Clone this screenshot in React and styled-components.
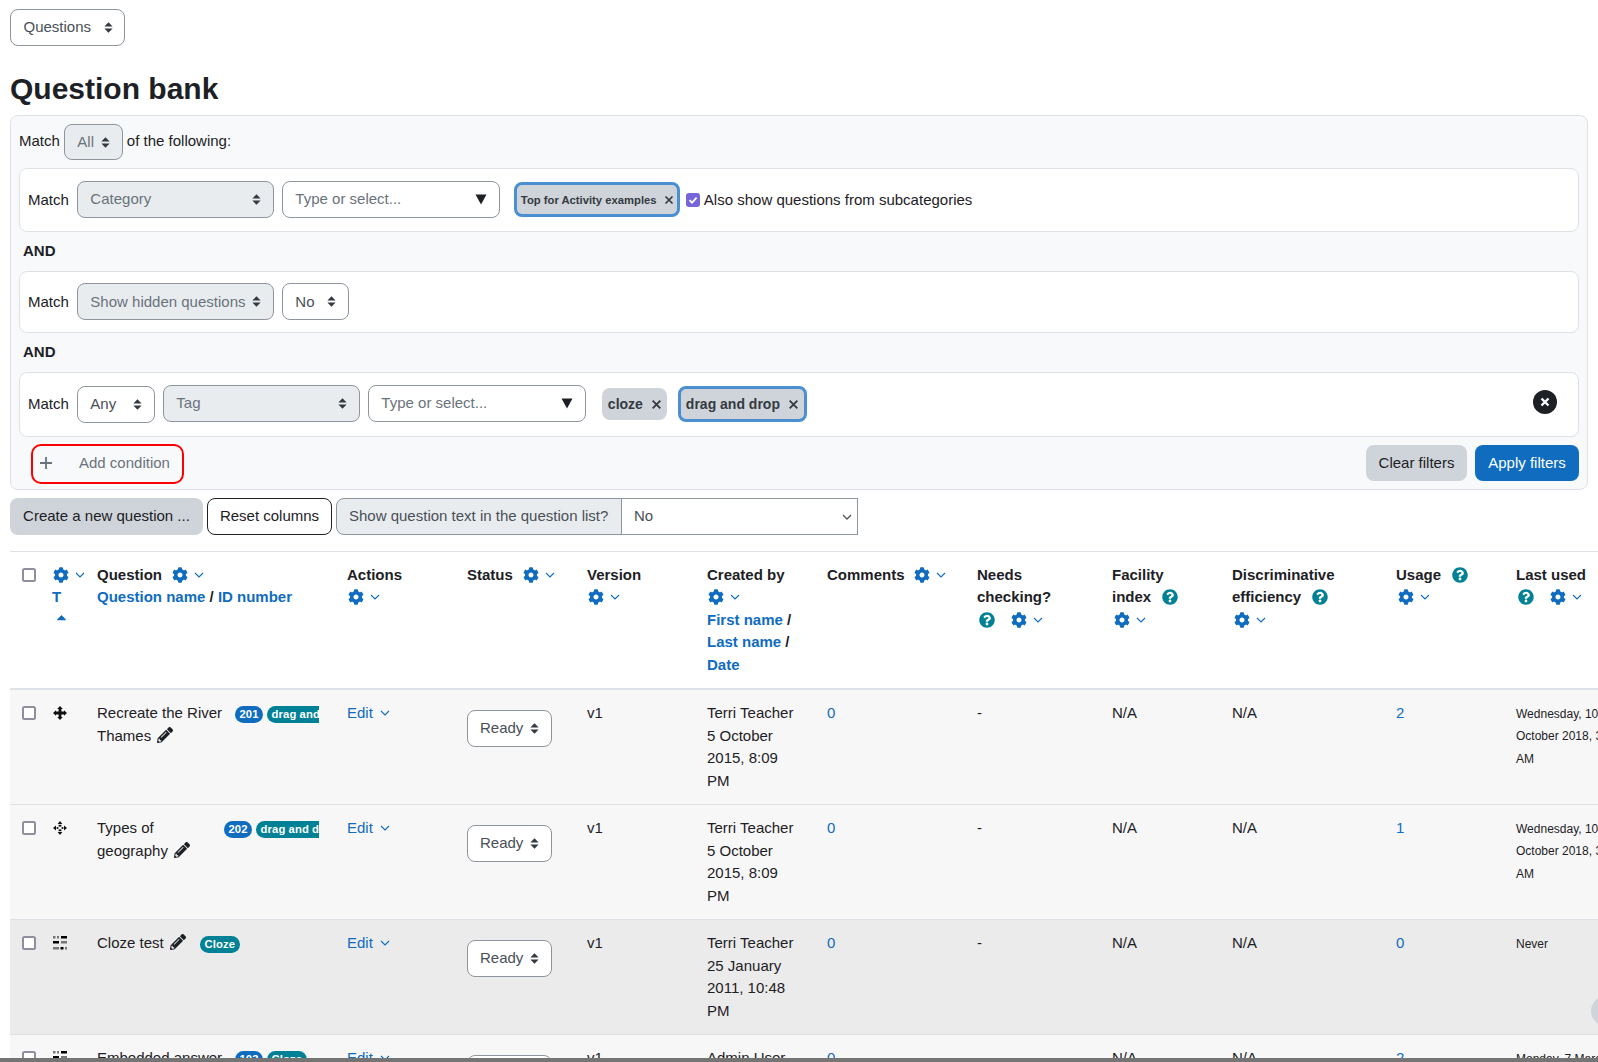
import React from "react";
import styled, { createGlobalStyle } from "styled-components";
import { FaCog, FaPencilAlt, FaQuestionCircle, FaCaretUp } from "react-icons/fa";

const Global = createGlobalStyle`
  html, body { margin: 0; padding: 0; height: 1062px; overflow: hidden; background: #fff; }
  body { font-family: "Liberation Sans", Arial, sans-serif; font-size: 15px; line-height: 22.5px; color: #1d2125; }
  * { box-sizing: border-box; }
`;

const Page = styled.div`
  position: relative;
  height: 1062px;
  padding: 9px 10px 0;
  overflow: hidden;
`;
const Control = styled.div`
  display: inline-flex;
  align-items: center;
  justify-content: space-between;
  flex: none;
  width: ${p => p.$w}px;
  height: ${p => p.$h || 37}px;
  margin-top: ${p => p.$mt || 0}px;
  padding: 0 11.5px 0 12.5px;
  border: 1px solid #8f959e;
  border-radius: 8px;
  color: ${p => (p.$muted ? "#6a737b" : "#495057")};
  background: ${p => (p.$off ? "#e9ecef" : "#fff")};
`;
const Heading = styled.h2`
  margin: 25px 0 9px;
  font-size: 30px;
  line-height: 35px;
  font-weight: 700;
  color: #1d2125;
`;
const FilterPanel = styled.section`
  border: 1px solid #dee2e6;
  border-radius: 8px;
  background: #f8f9fa;
  padding: 8px 8px 8px 8px;
  height: 375px;
`;
const MatchLine = styled.div`
  display: flex;
  align-items: flex-start;
  gap: 4px;
  height: 36px;
  margin-bottom: 8px;
  line-height: 34px;
`;
const Condition = styled.div`
  display: flex;
  align-items: center;
  height: ${p => p.$h}px;
  padding: 0 8px 0 8px;
  background: #fff;
  border: 1px solid #dee2e6;
  border-radius: 8px;
`;
const MatchLabel = styled.span`
  margin-right: 8px;
`;
const Gap = styled.div`
  width: 8px;
  flex: none;
`;
const AndLabel = styled.div`
  font-weight: 700;
  padding-left: 4px;
  height: 39.5px;
  line-height: 38px;
`;
const SelectedChip = styled.span`
  display: inline-flex;
  align-items: center;
  justify-content: space-between;
  flex: none;
  width: ${p => p.$w}px;
  height: ${p => p.$h}px;
  margin-left: ${p => p.$ml}px;
  padding: 0 ${p => (p.$small ? 3 : 5)}px 0 ${p => (p.$small ? 4 : p.$focus ? 5 : 6)}px;
  border-radius: 8px;
  background: #ced4da;
  border: ${p => (p.$focus ? "3px solid #4a90d0" : "none")};
  color: #343a40;
  font-weight: 700;
  font-size: ${p => (p.$small ? "11.25px" : "14px")};
`;
const ChipClose = styled.svg`
  width: ${p => p.$s}px;
  height: ${p => p.$s}px;
  flex: none;
`;
const CheckBox = styled.span`
  display: inline-flex;
  align-items: center;
  justify-content: center;
  width: 14px;
  height: 14px;
  margin: 0 4px 0 6px;
  border-radius: 3px;
  background: #7765dc;
`;
const RemoveButton = styled.span`
  display: inline-flex;
  align-items: center;
  justify-content: center;
  width: 24px;
  height: 24px;
  margin: -4px 13px 0 auto;
  border-radius: 50%;
  background: #1d2125;
`;
const FilterActions = styled.div`
  display: flex;
  align-items: flex-start;
  gap: 8px;
  margin-top: 7.5px;
`;
const AddCondition = styled.div`
  display: flex;
  align-items: center;
  width: 153px;
  height: 40px;
  margin: 0 auto 0 12px;
  padding: 0 0 2px 6px;
  border: 2px solid #f00;
  border-radius: 10px;
  color: #6a737b;
`;
const PlusMark = styled.svg`
  width: 14px;
  height: 14px;
  margin-right: 26px;
`;
const Button = styled.div`
  display: inline-flex;
  align-items: center;
  justify-content: center;
  flex: none;
  height: ${p => p.$h || 37}px;
  width: ${p => p.$w}px;
  margin-top: ${p => p.$mt || 0}px;
  border-radius: 8px;
  background: ${p => (p.$primary ? "#0f6cbf" : p.$outline ? "#fff" : "#ced4da")};
  color: ${p => (p.$primary ? "#fff" : "#1d2125")};
  border: ${p => (p.$outline ? "1px solid #1d2125" : "none")};
`;
const Toolbar = styled.div`
  display: flex;
  gap: 4px;
  margin-top: 8px;
  height: 37px;
`;
const InputGroup = styled.div`
  display: flex;
`;
const GroupLabel = styled.div`
  display: flex;
  align-items: center;
  width: 286px;
  padding-left: 12px;
  background: #e9ecef;
  border: 1px solid #8f959e;
  border-radius: 8px 0 0 8px;
  color: #495057;
`;
const NativeSelect = styled.select`
  appearance: none;
  width: 237px;
  height: 37px;
  margin-left: -1px;
  padding: 0 12px;
  background: #fff url("data:image/svg+xml,%3Csvg xmlns='http://www.w3.org/2000/svg' width='10' height='6'%3E%3Cpath d='M1 1l4 4 4-4' fill='none' stroke='%23555' stroke-width='1.3'/%3E%3C/svg%3E") no-repeat right 5px center;
  border: 1px solid #8f959e;
  border-radius: 0;
  color: #495057;
  font: inherit;
`;
const TableWrap = styled.div`
  margin-top: 16.4px;
  width: 1588px;
  overflow: hidden;
`;
const Table = styled.table`
  border-collapse: collapse;
  table-layout: fixed;
  width: 1628px;
  border-top: 1px solid #dee2e6;
`;
const Th = styled.th`
  padding: 11.2px 12px 0;
  vertical-align: top;
  text-align: left;
  font-weight: 700;
  border-bottom: 2px solid #dee2e6;
  height: 137px;
`;
const Row = styled.tr`
  background: ${p => (p.$hover ? "#ebebeb" : "#f7f7f7")};
`;
const Td = styled.td`
  padding: 12.3px 12px 11.7px;
  vertical-align: top;
  height: 115px;
  border-bottom: 1px solid #dee2e6;
`;
const SmallCell = styled(Td)`
  padding: 12.7px 12px 11.3px;
  font-size: 12px;
`;
const Link = styled.span`
  color: #0f6cbf;
`;
const SortLink = styled.span`
  color: #0f6cbf;
`;
const Tools = styled.span`
  display: inline-flex;
  align-items: center;
  gap: 6px;
  height: 16px;
  margin-left: ${p => p.$ml ?? 0}px;
  color: #0f6cbf;
  vertical-align: -3px;
`;
const HelpIcon = styled(FaQuestionCircle)`
  width: 16px;
  height: 16px;
  color: #008196;
  vertical-align: -3px;
  margin: ${p => p.$m || "0 0 0 7px"};
`;
const Thin = styled.svg`
  width: 10px;
  height: 6px;
  flex: none;
`;
const CheckCell = styled.span`
  display: block;
  width: 14px;
  height: 14px;
  margin-top: ${p => p.$mt ?? 4}px;
  border: 2px solid #8f8f9d;
  border-radius: 2.5px;
  background: #fff;
`;
const NameFlex = styled.div`
  display: flex;
  align-items: flex-start;
  width: 222px;
  overflow: hidden;
`;
const NameText = styled.div`
  flex: none;
  width: ${p => p.$w}px;
`;
const Pencil = styled(FaPencilAlt)`
  width: 16px;
  height: 16px;
  margin-left: 2px;
  color: #1d2125;
  vertical-align: -2px;
`;
const Badges = styled.div`
  display: flex;
  gap: 4px;
  flex: none;
  margin-top: 3.7px;
`;
const Badge = styled.span`
  flex: none;
  height: 17px;
  padding: 0 4.5px;
  border-radius: 9px;
  font-size: 11.25px;
  line-height: 17px;
  font-weight: 700;
  color: #fff;
  letter-spacing: 0.1px;
  background: ${p => (p.$teal ? "#008196" : "#0f6cbf")};
`;
const EditWrap = styled.span`
  display: inline-flex;
  align-items: center;
  gap: 7px;
  color: #0f6cbf;
`;
const StatusSelect = styled(Control)`
  margin-top: 7.7px;
  padding: 0 12px;
`;
const SortCaret = styled(FaCaretUp)`
  margin-left: 2px;
`;
const ScrollLine = styled.div`
  position: absolute;
  left: 0;
  right: 0;
  bottom: 0;
  height: 4px;
  background: #757575;
`;
const Floating = styled.div`
  position: absolute;
  left: 1591px;
  top: 996px;
  width: 30px;
  height: 30px;
  border-radius: 50%;
  background: #ced4da;
`;
const GearIcon = styled(FaCog)`
  width: 16px;
  height: 16px;
`;
const SmallGlyph = styled.svg`
  display: block;
  margin: 3.7px 0 0 1px;
  width: 14px;
  height: 14px;
`;

const Updown = () => (
  <svg width="9" height="11" viewBox="0 0 9 11" style={{ flex: "none" }}>
    <path d="M4.5 0.3 8.6 4.4H.4zM4.5 10.7.4 6.6h8.2z" fill="#343a40" />
  </svg>
);
const DownTri = () => (
  <svg width="12" height="11" viewBox="0 0 12 11" style={{ flex: "none" }}>
    <path d="M.5.5h11L6 10.5z" fill="#1d2125" />
  </svg>
);
const Chev = () => (
  <Thin viewBox="0 0 10 6">
    <path d="M1 1l4 4 4-4" fill="none" stroke="#0f6cbf" strokeWidth="1.1" />
  </Thin>
);
const Gear = ({ ml }) => (
  <Tools $ml={ml}>
    <GearIcon />
    <Chev />
  </Tools>
);
const X = ({ s, c = "#343a40", w = 1.7 }) => (
  <ChipClose $s={s} viewBox="0 0 10 10">
    <path d="M1.5 1.5l7 7M8.5 1.5l-7 7" stroke={c} strokeWidth={w} fill="none" />
  </ChipClose>
);
const MoveIcon = () => (
  <SmallGlyph viewBox="0 0 14 14">
    <path d="M5.6 5.6V3H4.2L7 0l2.8 3H8.4v2.6H11V4.2L14 7l-3 2.8V8.4H8.4V11h1.4L7 14l-2.8-3h1.4V8.4H3v1.4L0 7l3-2.8v1.4z" fill="#111" />
  </SmallGlyph>
);
const DotsIcon = () => (
  <SmallGlyph viewBox="0 0 14 14">
    <path d="M7 0l2.4 3H4.6zM7 14l-2.4-3h4.8zM0 7l3-2.4v4.8zM14 7l-3 2.4V4.6z" fill="#111" />
    <rect x="5.6" y="3.8" width="2.8" height="1.8" fill="#111" />
    <rect x="5.6" y="8.4" width="2.8" height="1.8" fill="#111" />
    <rect x="3.6" y="6.1" width="1.8" height="1.8" fill="#111" />
    <rect x="8.6" y="6.1" width="1.8" height="1.8" fill="#111" />
  </SmallGlyph>
);
const ClozeIcon = () => (
  <SmallGlyph viewBox="0 0 14 14">
    <rect x="0" y="0" width="2.5" height="2.5" fill="#777" />
    <rect x="4" y="0" width="2" height="2.5" fill="#777" />
    <rect x="8" y="0" width="6" height="2.5" fill="#000" />
    <rect x="0" y="5" width="6" height="2.5" fill="#000" />
    <rect x="8" y="5" width="6" height="2.5" fill="#777" />
    <rect x="0" y="11" width="6" height="2.5" fill="#777" />
    <rect x="7.5" y="11" width="3" height="2.5" fill="#000" />
    <rect x="12" y="11" width="2" height="2.5" fill="#777" />
  </SmallGlyph>
);

const widths = [30, 45, 250, 120, 120, 120, 120, 150, 135, 120, 164, 120, 134];

const rows = [
  {
    icon: <MoveIcon />,
    name: <>Recreate the River Thames <Pencil /></>,
    nameW: 138,
    badges: [["201", false], ["drag and drop", true]],
    by: "Terri Teacher",
    date: "5 October 2015, 8:09 PM",
    usage: 2,
    last: "Wednesday, 10 October 2018, 3:24 AM",
  },
  {
    icon: <DotsIcon />,
    name: <>Types of geography <Pencil /></>,
    nameW: 127,
    badges: [["202", false], ["drag and drop", true]],
    by: "Terri Teacher",
    date: "5 October 2015, 8:09 PM",
    usage: 1,
    last: "Wednesday, 10 October 2018, 3:24 AM",
  },
  {
    icon: <ClozeIcon />,
    name: <>Cloze test <Pencil /></>,
    nameW: 103,
    badges: [["Cloze", true]],
    by: "Terri Teacher",
    date: "25 January 2011, 10:48 PM",
    usage: 0,
    last: "Never",
    hover: true,
  },
  {
    icon: <ClozeIcon />,
    name: <>Embedded answer</>,
    nameW: 138,
    badges: [["103", false], ["Cloze", true]],
    by: "Admin User",
    date: "7 March 2011, 9:21 AM",
    usage: 2,
    last: "Monday, 7 March 2011, 9:21 AM",
  },
];

export default function App() {
  return (
    <Page>
      <Global />
      <Control $w={115}>Questions <Updown /></Control>
      <Heading>Question bank</Heading>
      <FilterPanel>
        <MatchLine>
          Match
          <Control $w={59} $h={36} $off $muted>All <Updown /></Control>
          of the following:
        </MatchLine>
        <Condition $h={63.5}>
          <MatchLabel>Match</MatchLabel>
          <Control $w={197} $mt={-1} $off $muted>Category <Updown /></Control>
          <Gap />
          <Control $w={218} $mt={-1} $muted>Type or select... <DownTri /></Control>
          <SelectedChip $w={166} $h={35} $ml={14} $focus $small>
            Top for Activity examples <X s={10} />
          </SelectedChip>
          <CheckBox>
            <svg width="10" height="10" viewBox="0 0 10 10">
              <path d="M1.5 5.2 4 7.6l4.6-5" fill="none" stroke="#fff" strokeWidth="1.8" />
            </svg>
          </CheckBox>
          Also show questions from subcategories
        </Condition>
        <AndLabel>AND</AndLabel>
        <Condition $h={61.5}>
          <MatchLabel>Match</MatchLabel>
          <Control $w={197} $off $muted>Show hidden questions <Updown /></Control>
          <Gap />
          <Control $w={67}>No <Updown /></Control>
        </Condition>
        <AndLabel>AND</AndLabel>
        <Condition $h={64.5}>
          <MatchLabel>Match</MatchLabel>
          <Control $w={78}>Any <Updown /></Control>
          <Gap />
          <Control $w={197} $mt={-2} $off $muted>Tag <Updown /></Control>
          <Gap />
          <Control $w={218} $mt={-2} $muted>Type or select... <DownTri /></Control>
          <SelectedChip $w={65} $h={32} $ml={16}>cloze <X s={11} /></SelectedChip>
          <SelectedChip $w={129} $h={36} $ml={11} $focus>drag and drop <X s={11} /></SelectedChip>
          <RemoveButton><X s={10} c="#fff" w={2.4} /></RemoveButton>
        </Condition>
        <FilterActions>
          <AddCondition>
            <PlusMark viewBox="0 0 14 14">
              <path d="M7 1v12M1 7h12" stroke="#6a737b" strokeWidth="1.8" fill="none" />
            </PlusMark>
            Add condition
          </AddCondition>
          <Button $w={101} $h={36} $mt={1}>Clear filters</Button>
          <Button $w={104} $h={36} $mt={1} $primary>Apply filters</Button>
        </FilterActions>
      </FilterPanel>
      <Toolbar>
        <Button $w={193}>Create a new question ...</Button>
        <Button $w={125} $outline>Reset columns</Button>
        <InputGroup>
          <GroupLabel>Show question text in the question list?</GroupLabel>
          <NativeSelect defaultValue="No"><option>No</option></NativeSelect>
        </InputGroup>
      </Toolbar>
      <TableWrap>
        <Table>
          <colgroup>
            {widths.map((w, i) => <col key={i} width={w} />)}
          </colgroup>
          <thead>
            <tr>
              <Th><CheckCell /></Th>
              <Th>
                <Gear ml={1} />
                <br />
                <SortLink>T</SortLink>
                <br />
                <Link><SortCaret /></Link>
              </Th>
              <Th>Question <Gear ml={6} /><br /><SortLink>Question name</SortLink> / <SortLink>ID number</SortLink></Th>
              <Th>Actions<br /><Gear ml={1} /></Th>
              <Th>Status <Gear ml={6} /></Th>
              <Th>Version<br /><Gear ml={1} /></Th>
              <Th>Created by<br /><Gear ml={1} /><br /><SortLink>First name</SortLink> /<br /><SortLink>Last name</SortLink> /<br /><SortLink>Date</SortLink></Th>
              <Th>Comments <Gear ml={5} /></Th>
              <Th>Needs<br />checking?<br /><HelpIcon $m="0 10px 0 2px" /><Gear ml={6} /></Th>
              <Th>Facility<br />index <HelpIcon /><br /><Gear ml={2} /></Th>
              <Th>Discriminative<br />efficiency <HelpIcon /><br /><Gear ml={2} /></Th>
              <Th>Usage <HelpIcon /><br /><Gear ml={2} /></Th>
              <Th>Last used<br /><HelpIcon $m="0 10px 0 2px" /><Gear ml={6} /></Th>
            </tr>
          </thead>
          <tbody>
            {rows.map((r, i) => (
              <Row key={i} $hover={r.hover}>
                <Td><CheckCell $mt={3.7} /></Td>
                <Td>{r.icon}</Td>
                <Td>
                  <NameFlex>
                    <NameText $w={r.nameW}>{r.name}</NameText>
                    <Badges>
                      {r.badges.map(([t, teal]) => <Badge key={t} $teal={teal}>{t}</Badge>)}
                    </Badges>
                  </NameFlex>
                </Td>
                <Td><EditWrap>Edit <Chev /></EditWrap></Td>
                <Td><StatusSelect $w={85}>Ready <Updown /></StatusSelect></Td>
                <Td>v1</Td>
                <Td>{r.by}<br />{r.date}</Td>
                <Td><Link>0</Link></Td>
                <Td>-</Td>
                <Td>N/A</Td>
                <Td>N/A</Td>
                <Td><Link>{r.usage}</Link></Td>
                <SmallCell>{r.last}</SmallCell>
              </Row>
            ))}
          </tbody>
        </Table>
      </TableWrap>
      <Floating />
      <ScrollLine />
    </Page>
  );
}
